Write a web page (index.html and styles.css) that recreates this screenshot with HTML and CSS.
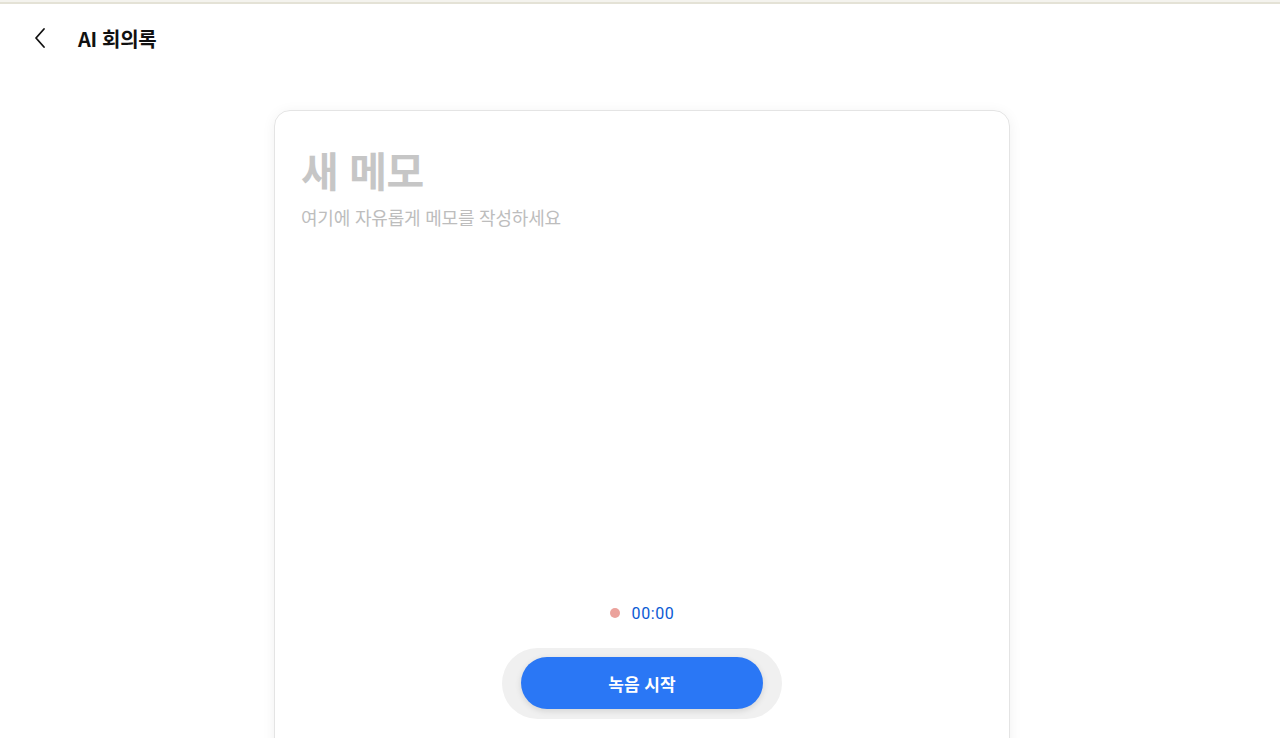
FILE: index.html
```html
<!DOCTYPE html>
<html lang="ko">
<head>
    <meta charset="utf-8">
    <title>AI 회의록</title>
    <meta name="viewport" content="width=device-width, initial-scale=1">
    <link rel="stylesheet" href="styles.css">
</head>
<body>
    <div class="topline"></div>

    <header class="header">
        <button class="back" aria-label="뒤로">
            <svg width="14" height="22" viewBox="0 0 14 22" fill="none">
                <path d="M11 2 L3 11 L11 20" stroke="#111" stroke-width="1.8" stroke-linecap="round" stroke-linejoin="round"/>
            </svg>
        </button>
        <h1>AI 회의록</h1>
    </header>

    <main class="main">
        <section class="memo-card">
            <h2 class="memo-title">새 메모</h2>
            <p class="memo-hint">여기에 자유롭게 메모를 작성하세요</p>

            <div class="recorder">
                <div class="timer">
                    <span class="dot"></span>
                    <span class="time">00:00</span>
                </div>
                <div class="record-wrap">
                    <button class="record-btn">녹음 시작</button>
                </div>
            </div>
        </section>
    </main>
</body>
</html>
```

FILE: styles.css
```css
html, body {
    margin: 0;
    padding: 0;
}

body {
    background: #fff;
    font-family: "Noto Sans CJK KR", "Noto Sans", sans-serif;
    color: #111;
    height: 738px;
    overflow: hidden;
}

.topline {
    height: 4px;
    background: linear-gradient(#f4f3ee 0, #f4f3ee 2px, #e4e2d6 2px, #e4e2d6 4px);
}

.header {
    display: flex;
    align-items: center;
    height: 70px;
    margin-top: -1px;
    padding-left: 33px;
}

.back {
    background: none;
    border: none;
    padding: 0;
    width: 18px;
    height: 24px;
    display: flex;
    align-items: center;
    cursor: pointer;
}

.header h1 {
    margin: 0 0 0 27px;
    font-size: 20px;
    font-weight: 700;
    letter-spacing: -0.3px;
}

.main {
    display: flex;
    justify-content: center;
    padding-top: 37px;
    padding-left: 4px;
}

.memo-card {
    width: 736px;
    height: 680px;
    box-sizing: border-box;
    border: 1px solid #e4e4e4;
    border-radius: 16px;
    box-shadow: 0 2px 14px rgba(0, 0, 0, 0.06);
    padding: 32px 26px 0;
    display: flex;
    flex-direction: column;
}

.memo-title {
    margin: 0;
    font-size: 41px;
    font-weight: 700;
    line-height: 1.3;
    color: #c6c6c6;
    letter-spacing: -0.5px;
}

.memo-hint {
    margin: 8px 0 0;
    font-size: 18px;
    color: #bdbdbd;
    letter-spacing: -0.2px;
}

.recorder {
    margin-top: 371px;
    display: flex;
    flex-direction: column;
    align-items: center;
}

.timer {
    display: flex;
    align-items: center;
    gap: 12px;
    height: 24px;
}

.dot {
    width: 10px;
    height: 10px;
    border-radius: 50%;
    background: #eba29c;
}

.time {
    font-family: "Roboto", "Noto Sans", sans-serif;
    font-size: 16px;
    color: #0a5ad4;
    letter-spacing: 0.6px;
}

.record-wrap {
    margin-top: 23px;
    background: #f0f0f0;
    border-radius: 40px;
    padding: 9px 19px 10px;
}

.record-btn {
    display: block;
    width: 242px;
    height: 52px;
    border: none;
    border-radius: 26px;
    background: #2a77f5;
    color: #fff;
    font-family: "Noto Sans CJK KR", sans-serif;
    font-size: 17px;
    font-weight: 700;
    box-shadow: 0 2px 6px rgba(0, 0, 0, 0.12);
    cursor: pointer;
}
```
